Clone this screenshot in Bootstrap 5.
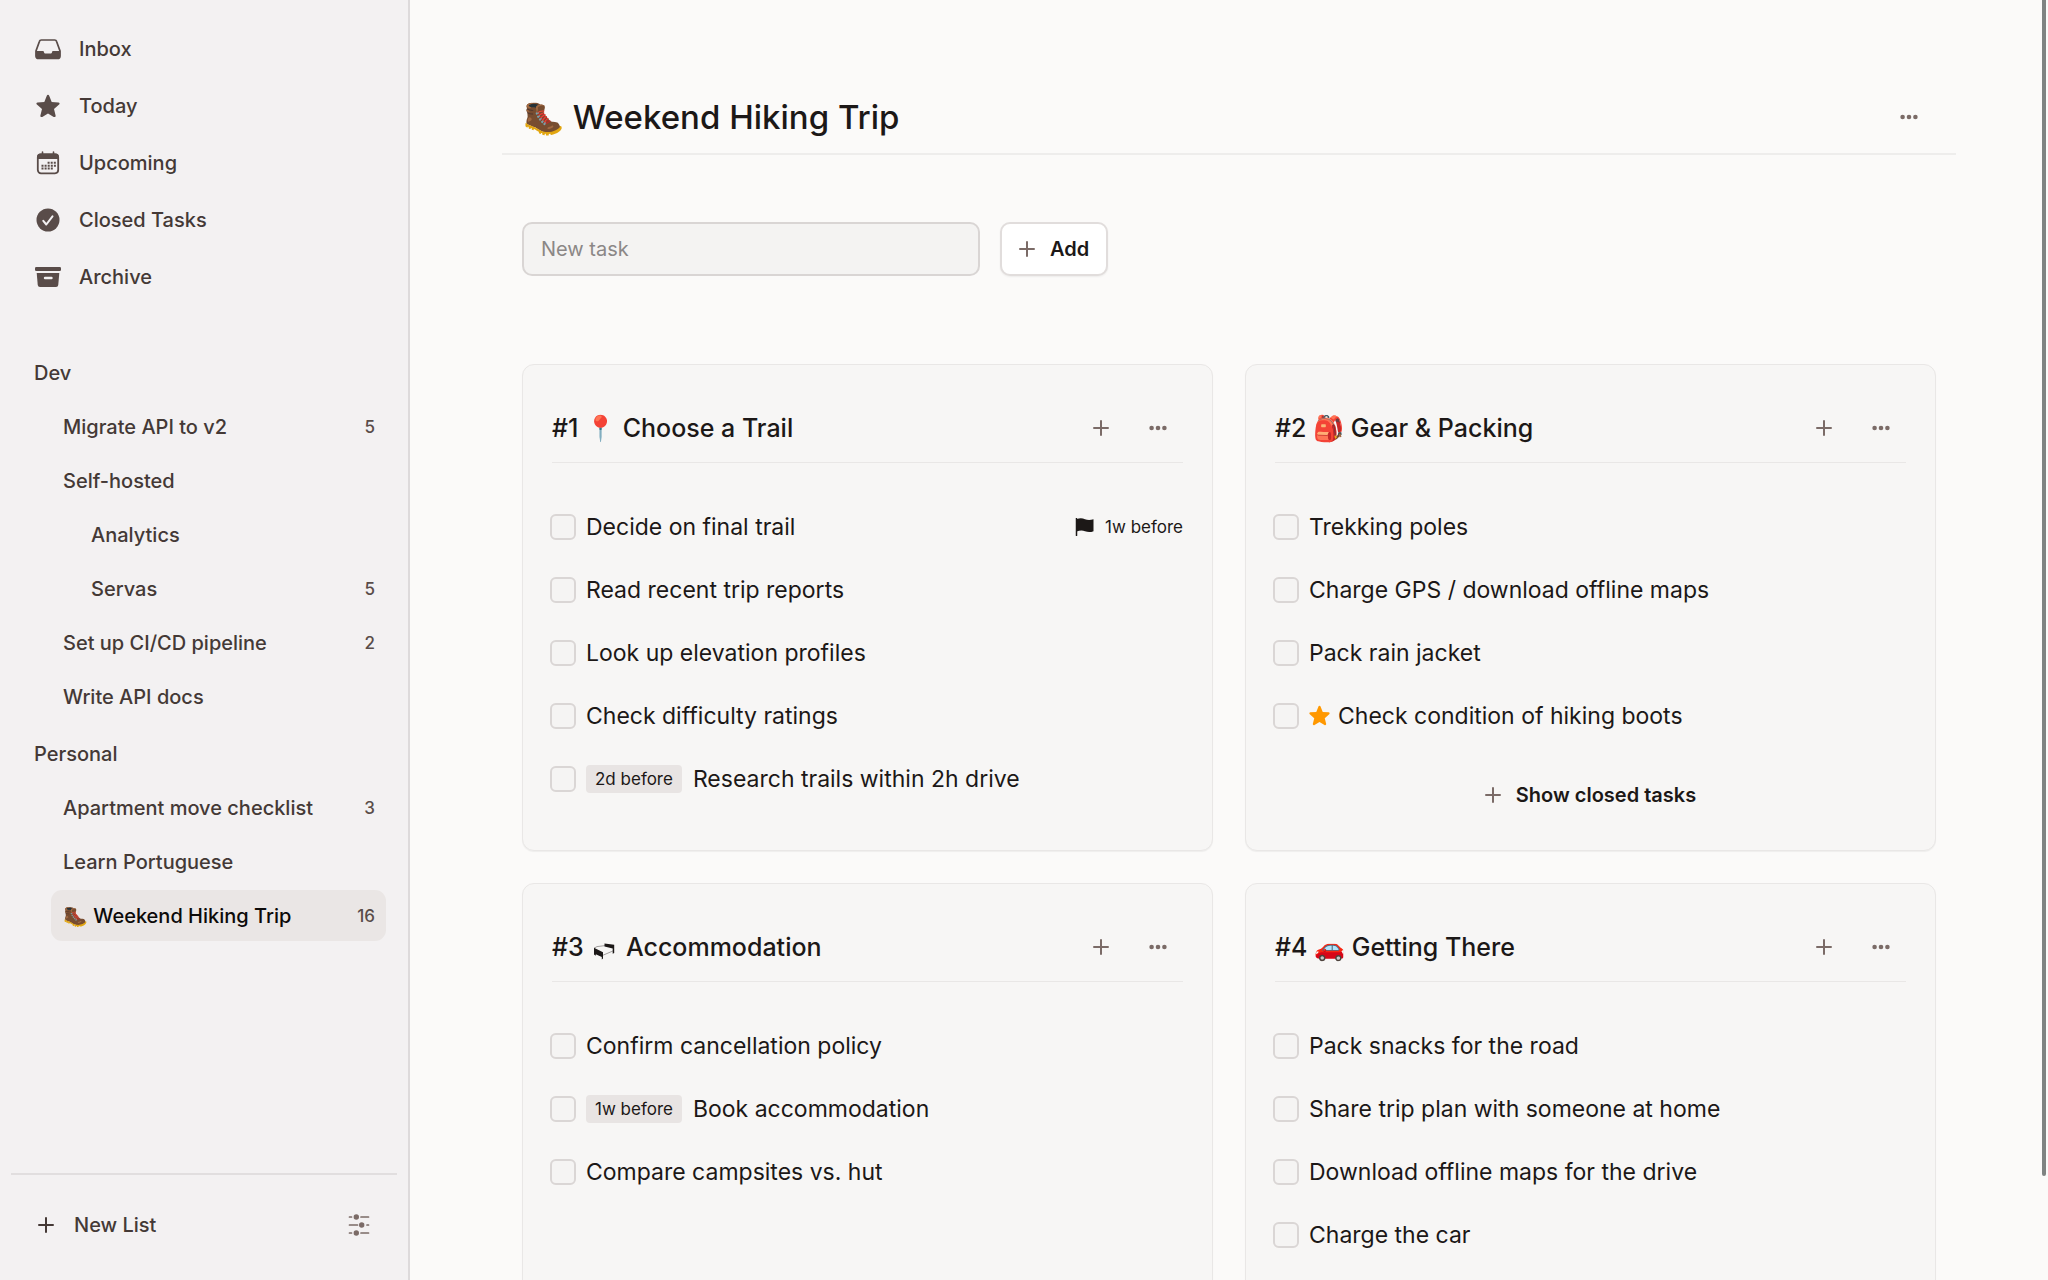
<!DOCTYPE html>
<html lang="en">
<head>
<meta charset="utf-8">
<meta name="viewport" content="width=device-width, initial-scale=1">
<title>Weekend Hiking Trip</title>
<link href="https://cdn.jsdelivr.net/npm/bootstrap@5.3.0/dist/css/bootstrap.min.css" rel="stylesheet">
<style>
:root { --ink: #1c1817; --brown: #443936; --icon: #594c49; --soft: #7b6b67; --line: #e9e7e6; }
body { font-family: Inter, "Liberation Sans", sans-serif; font-size: 20px; line-height: 28px; color: var(--ink); background: #fbfaf9; }
svg { display: block; flex: none; }
.side-pane { flex: 0 0 410px; background: #f3f1f2; border-right: 2px solid #dddadb; font-weight: 500; padding: 22px 11px 0; }
.side-pane a { color: var(--brown); text-decoration: none; display: flex; align-items: center; border-radius: 11px; }
.main-links { display: flex; flex-direction: column; gap: 3px; margin: 0 11px 43px; }
.main-links a { height: 54px; padding-left: 13px; gap: 18px; }
.main-links svg, .main-links a { color: var(--icon); }
.main-links span { color: var(--brown); }
.lists { display: flex; flex-direction: column; gap: 3px; margin: 0 11px 6px 0; }
.lists a { height: 51px; padding: 0 11px 0 12px; margin-left: 40px; }
.lists a.group-title { margin-left: 11px; }
.lists a.sub-item { margin-left: 68px; }
.lists a.current { background: #eae6e5; color: #0c0a09; }
.lists .tally { margin-left: auto; font-size: 17px; color: var(--icon); }
.side-foot { margin-top: auto; border-top: 2px solid #e1dedf; height: 107px; padding: 0 27px 5px 27px; }
.side-foot button { font-weight: 500; color: var(--brown); font-size: 20px; padding: 0; border: 0; }
.page-area { padding: 81px 92px 32px; scrollbar-width: none; }
.page-area::-webkit-scrollbar { display: none; }
.page-head { height: 74px; padding: 0 22px 0 21px; border-bottom: 2px solid #eeedec; }
.page-head h1 { font-size: 33px; line-height: 42px; font-weight: 500; margin: 0; }
.tool-btn { width: 51px; height: 51px; padding: 0; border: 0; color: var(--soft); display: flex; align-items: center; justify-content: center; }
.page-body { padding: 0 20px; }
.add-form { margin: 67px 0 88px; gap: 20px; }
.add-form input { flex: 0 1 458px; width: auto; height: 54px; font-size: 20px; padding: 0 17px; background: #f4f3f2; border: 2px solid #d9d5d4; border-radius: 10px; color: var(--ink); }
.add-form input::placeholder { color: #8b8786; opacity: 1; }
.plain-btn { height: 54px; font-size: 20px; line-height: 28px; font-weight: 600; color: var(--ink); display: flex; align-items: center; justify-content: center; gap: 15px; padding: 0 17px; border: 2px solid transparent; border-radius: 10px; }
.plain-btn svg { color: var(--soft); }
.add-form .plain-btn { background: #fff; border-color: #e1dddc; box-shadow: 0 1px 2px rgba(0,0,0,.06); }
.board { display: grid; grid-template-columns: 1fr 1fr; gap: 32px; }
.task-card { background: #f7f6f5; border: 1px solid var(--line); border-radius: 12px; padding: 28px 29px; box-shadow: 0 1px 1px rgba(0,0,0,.05); display: flex; flex-direction: column; }
.task-head { height: 70px; border-bottom: 1px solid var(--line); gap: 6px; margin-bottom: 32px; }
.task-head h2 { font-size: 25px; line-height: 32px; font-weight: 500; margin: 0 auto 0 0; }
.task-head h2 svg { display: inline-block; vertical-align: -4px; }
.task-line { height: 63px; display: flex; align-items: center; font-size: 23px; gap: 10px; margin-left: -2px; }
.task-line input { flex: none; width: 26px; height: 26px; margin: 0; border: 2px solid #dad6d5; border-radius: 6px; background-color: #f5f4f3; }
.task-line label { display: flex; align-items: center; }
.when-tag { background: #e8e4e3; border-radius: 4px; height: 28px; padding: 0 9px; font-size: 17px; margin-right: 11px; }
.due { margin-left: auto; font-size: 17px; display: flex; align-items: center; gap: 10px; }
.task-card .plain-btn { margin: 21px auto 0; }
.thumb-bar { position: fixed; right: 2px; top: 0; width: 4px; height: calc(100vh - 104px); background: #7f8382; border-radius: 0 0 2px 2px; }
</style>
<script src="https://cdn.jsdelivr.net/npm/bootstrap@5.3.0/dist/js/bootstrap.bundle.min.js"></script>
</head>
<body class="d-flex vh-100 overflow-hidden">
<svg width="0" height="0" class="position-absolute" aria-hidden="true">
  <symbol id="plus" viewBox="0 0 16 16"><path d="M8 1v14M1 8h14" fill="none" stroke="currentColor" stroke-width="2" stroke-linecap="round"/></symbol>
  <symbol id="dots" viewBox="0 0 18 6"><g fill="currentColor"><circle cx="2.6" cy="3" r="2.3"/><circle cx="9" cy="3" r="2.3"/><circle cx="15.4" cy="3" r="2.3"/></g></symbol>
  <symbol id="star" viewBox="0 0 24 24"><path d="M12 .8c.6 0 1 .4 1.200.9l2.500 6.200 6.700.5c1.200.1 1.600 1.400.7 2.200l-5.100 4.400 1.600 6.500c.3 1.200-.9 2-1.900 1.400L12 19.400l-5.700 3.500c-1 .6-2.200-.2-1.900-1.400L6 15 .9 10.600c-.9-.8-.5-2.100.7-2.200l6.700-.5 2.500-6.200c.2-.5.6-.9 1.200-.9z" fill="currentColor"/></symbol>
</svg>

<aside class="side-pane d-flex flex-column">
  <nav class="main-links" aria-label="Views">
    <a href="#"><svg width="26" height="26" viewBox="0 0 26 26"><path d="M6.300 4h13.400c.9 0 1.600.5 1.800 1.300L25 15v5c0 1.700-1 2.500-2.500 2.500h-19C2 22.500 1 21.700 1 20v-5L4.500 5.300C4.700 4.500 5.400 4 6.300 4z" fill="none" stroke="currentColor" stroke-width="1.700"/><path d="M.8 15h7c.8 0 .9.400 1.100 1 .3 1.100.8 1.500 1.700 1.500h4.800c.9 0 1.400-.4 1.700-1.500.2-.6.3-1 1.100-1h7v5c0 2-1 3-2.700 3h-19c-1.700 0-2.700-1-2.700-3z" fill="currentColor"/></svg><span>Inbox</span></a>
    <a href="#"><svg width="26" height="24" viewBox="0 0 24 24"><use href="#star"/></svg><span>Today</span></a>
    <a href="#"><svg width="26" height="26" viewBox="0 0 26 26"><path d="M7.500 2v4M18.500 2v4" stroke="currentColor" stroke-width="1.600" stroke-linecap="round"/><rect x="2.800" y="4.300" width="20.400" height="19" rx="3.200" fill="none" stroke="currentColor" stroke-width="1.800"/><path d="M2 9V7.500Q2 3.500 5.500 3.500h15Q24 3.500 24 7.500V9z" fill="currentColor"/><g stroke="currentColor" stroke-width="2" stroke-dasharray="2 1.100"><path d="M12.600 12.800h8.600M6.500 15.700h14.700M6.500 18.600h11.500"/></g></svg><span>Upcoming</span></a>
    <a href="#"><svg width="26" height="26" viewBox="0 0 26 26"><circle cx="13" cy="13" r="11.500" fill="currentColor"/><path d="M8.300 13.800l3 3.700 6.200-8.200" fill="none" stroke="#f3f1f2" stroke-width="2" stroke-linecap="round" stroke-linejoin="round"/></svg><span>Closed Tasks</span></a>
    <a href="#"><svg width="26" height="26" viewBox="0 0 26 26"><rect y="3" width="26" height="4" rx="1.300" fill="currentColor"/><path d="M1.700 9h22.600l-1 11.500c-.2 1.700-1 2.500-2.300 2.500H5c-1.300 0-2.100-.8-2.300-2.500z" fill="currentColor"/><path d="M10 14h6.500" stroke="#f3f1f2" stroke-width="2.400" stroke-linecap="round"/></svg><span>Archive</span></a>
  </nav>
  <nav class="lists" aria-label="Dev lists">
    <a href="#" class="group-title">Dev</a>
    <a href="#">Migrate API to v2<span class="tally">5</span></a>
    <a href="#">Self-hosted</a>
    <a href="#" class="sub-item">Analytics</a>
    <a href="#" class="sub-item">Servas<span class="tally">5</span></a>
    <a href="#">Set up CI/CD pipeline<span class="tally">2</span></a>
    <a href="#">Write API docs</a>
  </nav>
  <nav class="lists" aria-label="Personal lists">
    <a href="#" class="group-title">Personal</a>
    <a href="#">Apartment move checklist<span class="tally">3</span></a>
    <a href="#">Learn Portuguese</a>
    <a href="#" class="current" aria-current="page">🥾 Weekend Hiking Trip<span class="tally">16</span></a>
  </nav>
  <div class="side-foot d-flex align-items-center justify-content-between">
    <button type="button" class="btn d-flex align-items-center"><svg width="16" height="16" class="me-3"><use href="#plus"/></svg><span class="ms-1">New List</span></button>
    <button type="button" class="btn" aria-label="Settings"><svg width="22" height="22" viewBox="0 0 22 22" color="#7b6b67"><g stroke="currentColor" stroke-width="1.700" stroke-linecap="round"><path d="M1.500 3h2M13 3h7.500M1.500 11h8M19 11h1.500M1.500 19h2M13 19h7.500"/></g><g fill="currentColor"><circle cx="8.300" cy="3" r="2.700"/><circle cx="13.700" cy="11" r="2.700"/><circle cx="8.300" cy="19" r="2.700"/></g></svg></button>
  </div>
</aside>

<main class="page-area flex-grow-1 overflow-auto">
  <header class="page-head d-flex align-items-center justify-content-between">
    <h1>🥾 Weekend Hiking Trip</h1>
    <button type="button" class="btn tool-btn" aria-label="List menu"><svg width="18" height="6"><use href="#dots"/></svg></button>
  </header>
  <div class="page-body">
    <form class="add-form d-flex">
      <input type="text" class="form-control" placeholder="New task" aria-label="New task">
      <button type="button" class="btn plain-btn"><svg width="16" height="16"><use href="#plus"/></svg>Add</button>
    </form>
    <div class="board">
      <section class="task-card">
        <div class="task-head d-flex align-items-center"><h2>#1 📍 Choose a Trail</h2>
          <button type="button" class="btn tool-btn" aria-label="Add task"><svg width="16" height="16"><use href="#plus"/></svg></button>
          <button type="button" class="btn tool-btn" aria-label="Section menu"><svg width="18" height="6"><use href="#dots"/></svg></button></div>
        <div class="task-line"><input class="form-check-input" type="checkbox" id="t1"><label for="t1">Decide on final trail</label><span class="due"><svg width="20" height="18" viewBox="0 0 20 18"><path d="M1.500.5v17" stroke="currentColor" stroke-width="1.500" stroke-linecap="round"/><path d="M1.500 1.200C5-.2 7.500.2 10 1.200s5.500 1 8.500 0v12c-3 1.200-6 1-8.500 0s-5-1-8.500.4z" fill="currentColor"/></svg>1w before</span></div>
        <div class="task-line"><input class="form-check-input" type="checkbox" id="t2"><label for="t2">Read recent trip reports</label></div>
        <div class="task-line"><input class="form-check-input" type="checkbox" id="t3"><label for="t3">Look up elevation profiles</label></div>
        <div class="task-line"><input class="form-check-input" type="checkbox" id="t4"><label for="t4">Check difficulty ratings</label></div>
        <div class="task-line"><input class="form-check-input" type="checkbox" id="t5"><label for="t5"><span class="when-tag">2d before</span>Research trails within 2h drive</label></div>
      </section>
      <section class="task-card">
        <div class="task-head d-flex align-items-center"><h2>#2 🎒 Gear &amp; Packing</h2>
          <button type="button" class="btn tool-btn" aria-label="Add task"><svg width="16" height="16"><use href="#plus"/></svg></button>
          <button type="button" class="btn tool-btn" aria-label="Section menu"><svg width="18" height="6"><use href="#dots"/></svg></button></div>
        <div class="task-line"><input class="form-check-input" type="checkbox" id="t6"><label for="t6">Trekking poles</label></div>
        <div class="task-line"><input class="form-check-input" type="checkbox" id="t7"><label for="t7">Charge GPS / download offline maps</label></div>
        <div class="task-line"><input class="form-check-input" type="checkbox" id="t8"><label for="t8">Pack rain jacket</label></div>
        <div class="task-line"><input class="form-check-input" type="checkbox" id="t9"><label for="t9"><svg width="21" height="21" class="me-2" color="#ff9800"><use href="#star"/></svg>Check condition of hiking boots</label></div>
        <button type="button" class="btn plain-btn"><svg width="16" height="16"><use href="#plus"/></svg>Show closed tasks</button>
      </section>
      <section class="task-card">
        <div class="task-head d-flex align-items-center"><h2>#3 <svg class="mx-1" width="21" height="17" viewBox="0 0 21 17" role="img" aria-label="Bed"><path d="M0 5.500l9.500 4 10.500-4V9.500l-10.500 5-9.500-3z" fill="#f7f6f5"/><path d="M0 5.200l3-1.600 8-1M0 9l9.500 3 10.500-4.500" fill="none" stroke="#8a8685" stroke-width=".8"/><path d="M0 4.800l9 4.400v6.300l-1.200 1v-2.600l-6-2.700v1.600L0 11.500z" fill="#1c1817"/><path d="M10.500.5l9.700 1.300V10l-1.500.8V5.500l-8.200-2z" fill="#1c1817"/></svg> Accommodation</h2>
          <button type="button" class="btn tool-btn" aria-label="Add task"><svg width="16" height="16"><use href="#plus"/></svg></button>
          <button type="button" class="btn tool-btn" aria-label="Section menu"><svg width="18" height="6"><use href="#dots"/></svg></button></div>
        <div class="task-line"><input class="form-check-input" type="checkbox" id="t10"><label for="t10">Confirm cancellation policy</label></div>
        <div class="task-line"><input class="form-check-input" type="checkbox" id="t11"><label for="t11"><span class="when-tag">1w before</span>Book accommodation</label></div>
        <div class="task-line"><input class="form-check-input" type="checkbox" id="t12"><label for="t12">Compare campsites vs. hut</label></div>
      </section>
      <section class="task-card">
        <div class="task-head d-flex align-items-center"><h2>#4 🚗 Getting There</h2>
          <button type="button" class="btn tool-btn" aria-label="Add task"><svg width="16" height="16"><use href="#plus"/></svg></button>
          <button type="button" class="btn tool-btn" aria-label="Section menu"><svg width="18" height="6"><use href="#dots"/></svg></button></div>
        <div class="task-line"><input class="form-check-input" type="checkbox" id="t13"><label for="t13">Pack snacks for the road</label></div>
        <div class="task-line"><input class="form-check-input" type="checkbox" id="t14"><label for="t14">Share trip plan with someone at home</label></div>
        <div class="task-line"><input class="form-check-input" type="checkbox" id="t15"><label for="t15">Download offline maps for the drive</label></div>
        <div class="task-line"><input class="form-check-input" type="checkbox" id="t16"><label for="t16">Charge the car</label></div>
      </section>
    </div>
  </div>
</main>
<div class="thumb-bar" aria-hidden="true"></div>
</body>
</html>
